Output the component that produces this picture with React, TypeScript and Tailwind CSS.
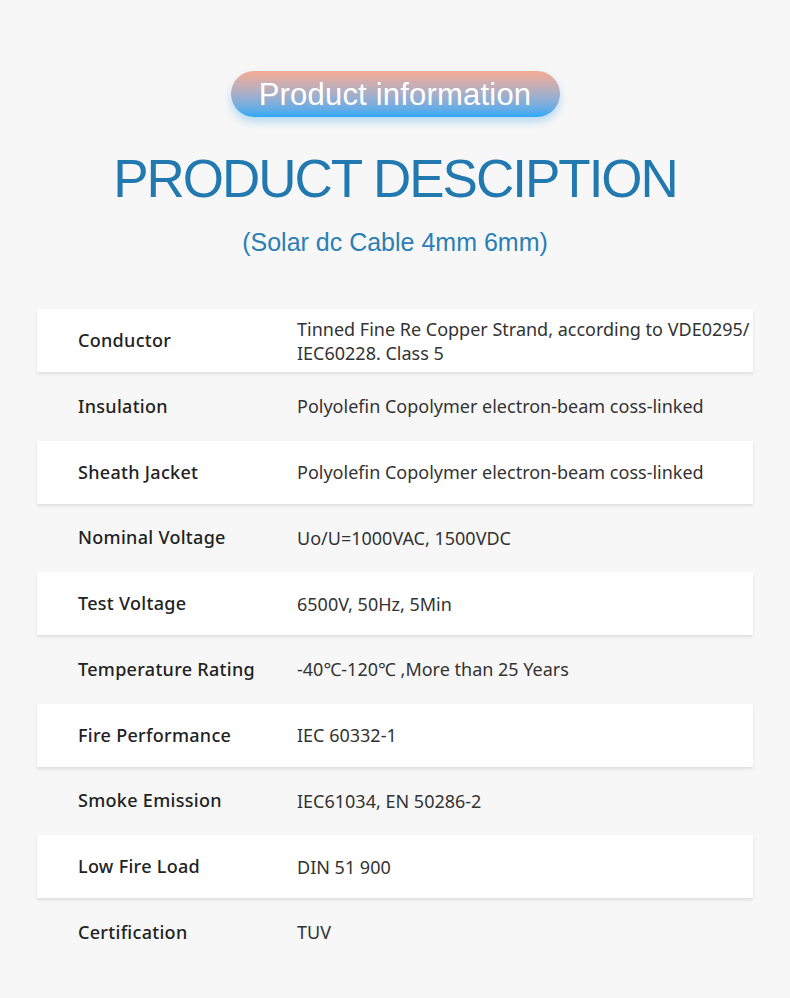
import { FC } from "react";

type Spec = {
  label: string;
  value: string;
};

const specs: Spec[] = [
  {
    label: "Conductor",
    value: "Tinned Fine Re Copper Strand, according to VDE0295/ IEC60228. Class 5",
  },
  { label: "Insulation", value: "Polyolefin Copolymer electron-beam coss-linked" },
  { label: "Sheath Jacket", value: "Polyolefin Copolymer electron-beam coss-linked" },
  { label: "Nominal Voltage", value: "Uo/U=1000VAC, 1500VDC" },
  { label: "Test Voltage", value: "6500V, 50Hz, 5Min" },
  { label: "Temperature Rating", value: "-40℃-120℃ ,More than 25 Years" },
  { label: "Fire Performance", value: "IEC 60332-1" },
  { label: "Smoke Emission", value: "IEC61034, EN 50286-2" },
  { label: "Low Fire Load", value: "DIN 51 900" },
  { label: "Certification", value: "TUV" },
];

const App: FC = () => {
  return (
    <div className="min-h-[998px] w-[790px] bg-[#f7f7f7] pt-[71px] font-['Liberation_Sans',sans-serif]">
      <div className="flex justify-center">
        <div className="flex h-[46px] w-[329px] items-center justify-center rounded-full bg-gradient-to-b from-[#f6aa92] to-[#27a9f6] shadow-[0_5px_8px_rgba(40,150,230,0.3)]">
          <span className="mt-[3px] text-[31px] tracking-[0.2px] text-white">Product information</span>
        </div>
      </div>

      <h1 className="mt-[30px] text-center text-[53px] leading-[64px] tracking-[-2px] text-[#2179b0]">PRODUCT DESCIPTION</h1>
      <p className="mt-[15px] text-center text-[25px] leading-[32px] text-[#2a7fb5]">(Solar dc Cable 4mm 6mm)</p>

      <section className="mx-[37px] mt-[51px] font-['Noto_Sans',sans-serif]">
        {specs.map((spec, i) => (
          <div
            key={i}
            className={`flex items-center ${i % 2 === 0 ? "h-[63px] bg-white shadow-[0_2px_3px_rgba(0,0,0,0.1)]" : "h-[68.5px]"}`}
          >
            <div className="w-[260px] pl-[41px] text-[18px] font-medium tracking-[0.3px] text-[#222]">{spec.label}</div>
            <div className="w-[456px] text-[18px] leading-[24px] text-[#333]">{spec.value}</div>
          </div>
        ))}
      </section>
    </div>
  );
};

export default App;
